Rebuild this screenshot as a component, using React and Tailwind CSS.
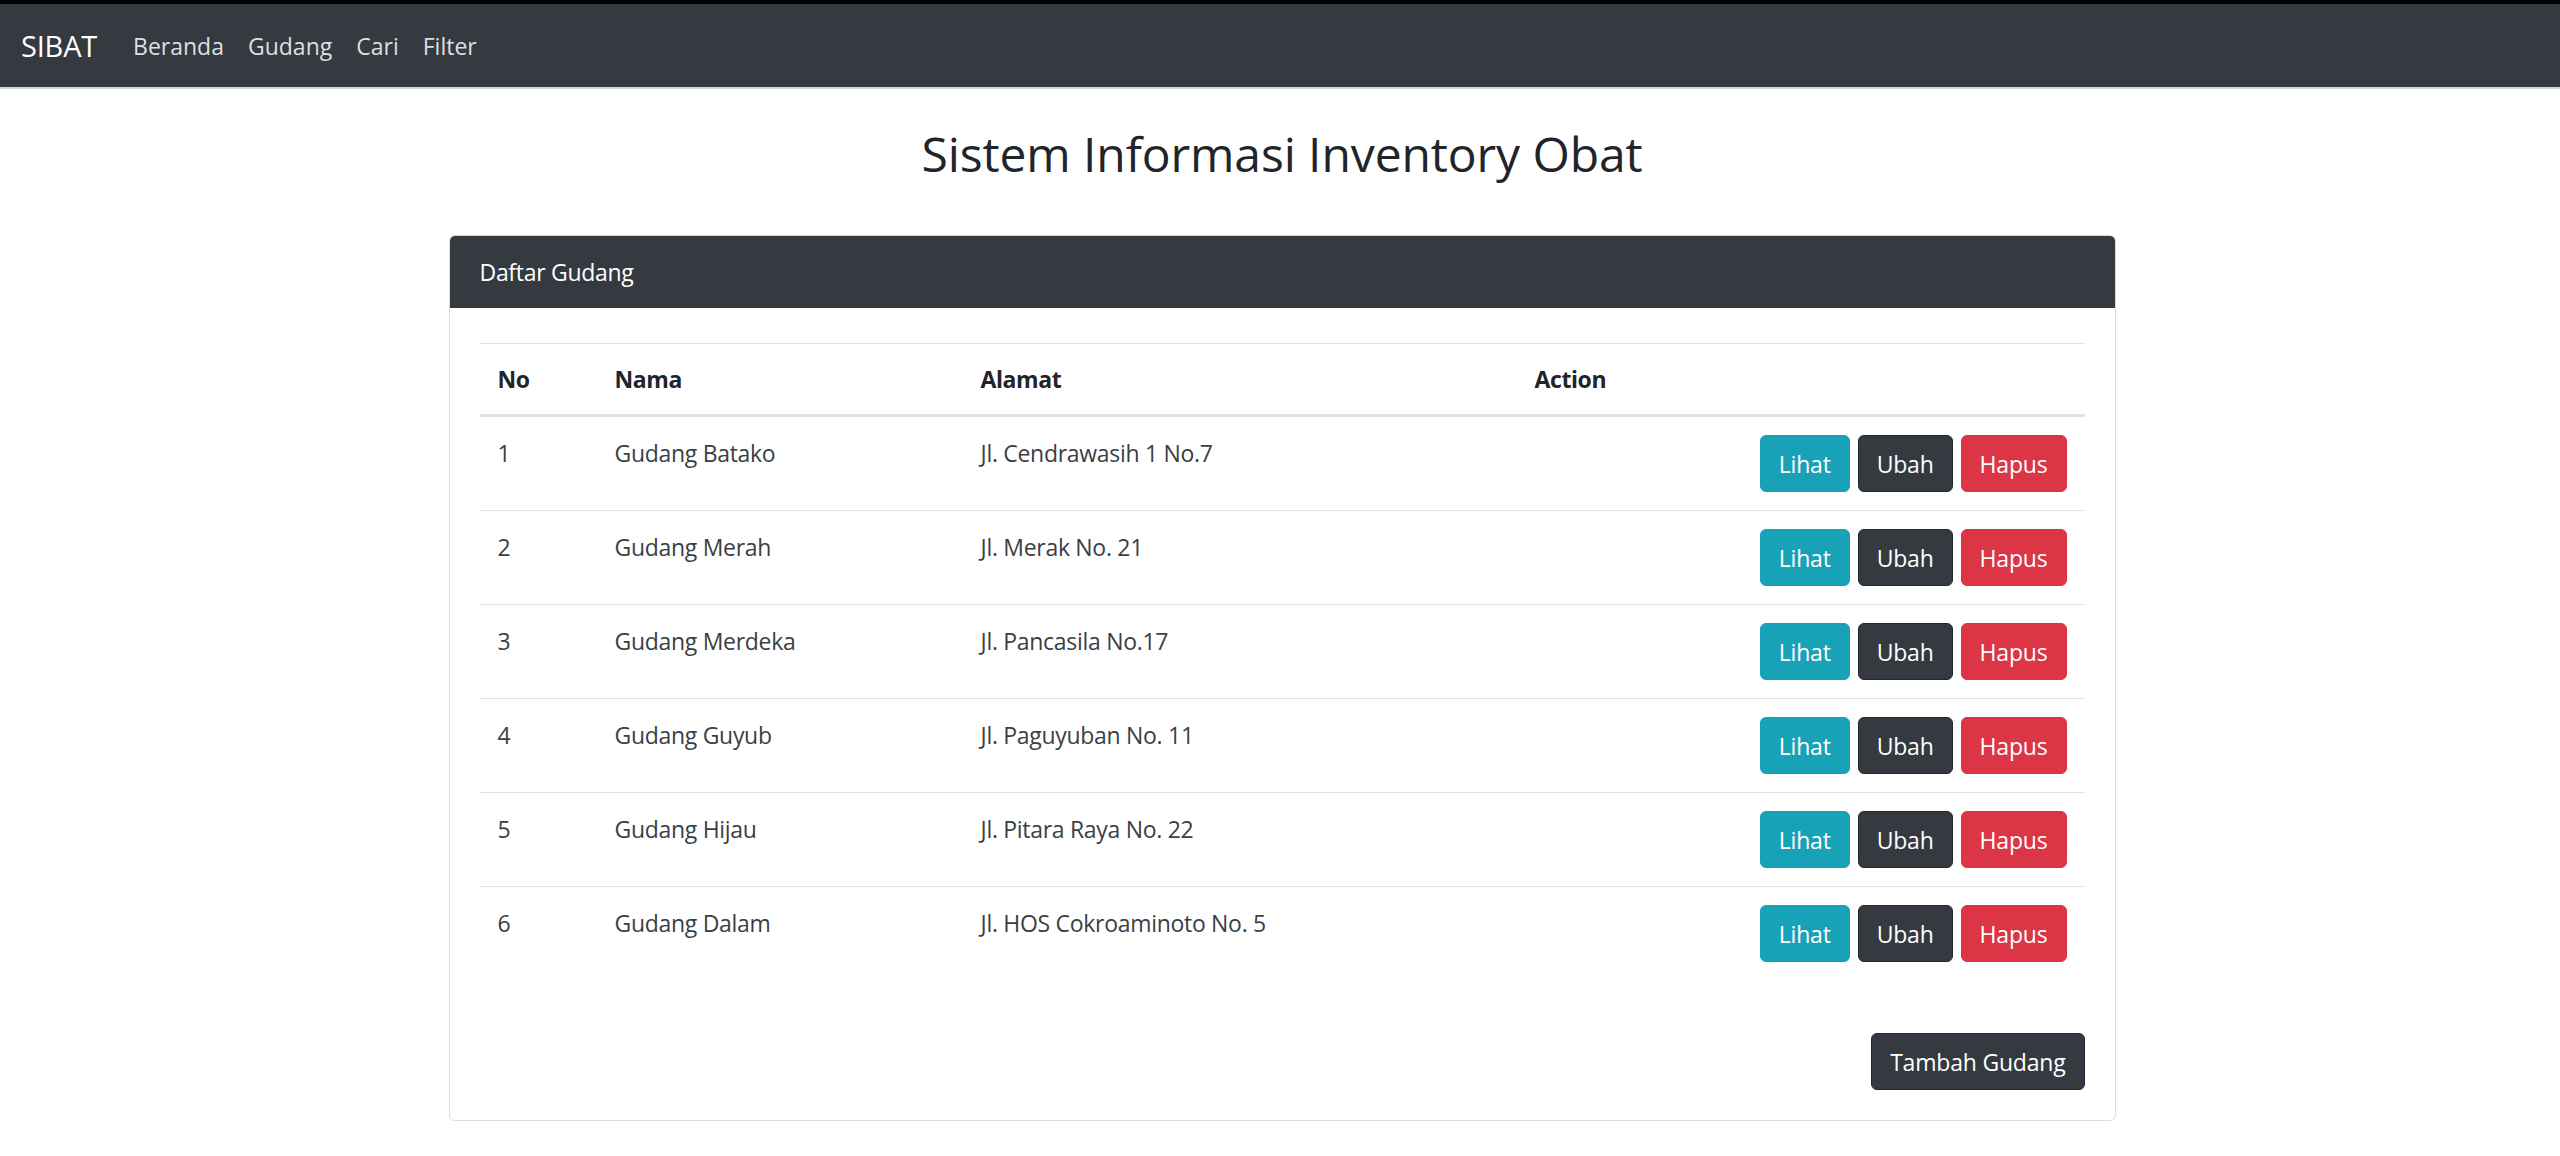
import React from "react";

const rows = [
  ["1", "Gudang Batako", "Jl. Cendrawasih 1 No.7"],
  ["2", "Gudang Merah", "Jl. Merak No. 21"],
  ["3", "Gudang Merdeka", "Jl. Pancasila No.17"],
  ["4", "Gudang Guyub", "Jl. Paguyuban No. 11"],
  ["5", "Gudang Hijau", "Jl. Pitara Raya No. 22"],
  ["6", "Gudang Dalam", "Jl. HOS Cokroaminoto No. 5"],
];

function Btn({ className, children }) {
  return (
    <button
      className={
        "h-[57px] px-[18px] text-[23px] tracking-[-0.2px] leading-[36px] rounded-[6px] border-[1.5px] text-white " +
        className
      }
    >
      {children}
    </button>
  );
}

export default function App() {
  return (
    <div
      className="min-h-screen bg-white text-[#212529]"
      style={{ fontFamily: '"Segoe UI", "Open Sans", "Noto Sans", sans-serif' }}
    >
      <div className="h-[4px] bg-black" />
      <nav className="h-[83px] bg-[#343a40] flex items-center pl-[21px]">
        <span className="text-[29px] tracking-[-0.2px] leading-[45px] text-white mr-[24px]">SIBAT</span>
        <a className="px-[12px] text-[23px] tracking-[0px] leading-[36px] text-[#dedfe1]">Beranda</a>
        <a className="px-[12px] text-[23px] tracking-[0px] leading-[36px] text-[#dedfe1]">Gudang</a>
        <a className="px-[12px] text-[23px] tracking-[0px] leading-[36px] text-[#dedfe1]">Cari</a>
        <a className="px-[12px] text-[23px] tracking-[0px] leading-[36px] text-[#dedfe1]">Filter</a>
      </nav>
      <div className="h-[2px] bg-[#d4d6d8]" />

      <div className="flex justify-center pl-[4px]">
        <div className="w-[1667px]">
          <h2 className="mt-[36px] text-center text-[48px] tracking-[-0.1px] leading-[58px] font-medium text-[#212529]">
            Sistem Informasi Inventory Obat
          </h2>

          <div className="mt-[52px] border border-[#dcdcdc] rounded-[6px] overflow-hidden">
            <div className="h-[72px] bg-[#343a40] flex items-center px-[30px] text-[23px] tracking-[-0.3px] text-white">
              Daftar Gudang
            </div>
            <div className="px-[30px] pt-[35px] pb-[30px]">
              <table className="w-full table-fixed border-collapse text-[23px] tracking-[-0.3px] leading-[36px]">
                <colgroup>
                  <col className="w-[117px]" />
                  <col className="w-[366px]" />
                  <col className="w-[554px]" />
                  <col className="w-[568px]" />
                </colgroup>
                <thead>
                  <tr>
                    <th className="text-left font-bold tracking-[-0.4px] px-[18px] py-[17px] border-t border-t-[#dee2e6] border-b-[3px] border-b-[#dee2e6]">No</th>
                    <th className="text-left font-bold tracking-[-0.4px] px-[18px] py-[17px] border-t border-t-[#dee2e6] border-b-[3px] border-b-[#dee2e6]">Nama</th>
                    <th className="text-left font-bold tracking-[-0.4px] px-[18px] py-[17px] border-t border-t-[#dee2e6] border-b-[3px] border-b-[#dee2e6]">Alamat</th>
                    <th className="text-left font-bold tracking-[-0.4px] px-[18px] py-[17px] border-t border-t-[#dee2e6] border-b-[3px] border-b-[#dee2e6]">Action</th>
                  </tr>
                </thead>
                <tbody>
                  {rows.map((r, i) => (
                    <tr key={r[0]} className={i > 0 ? "border-t border-[#dee2e6]" : ""}>
                      <td className="align-top px-[18px] py-[18px] text-[#3a3f44]">{r[0]}</td>
                      <td className="align-top px-[18px] py-[18px] text-[#3a3f44]">{r[1]}</td>
                      <td className="align-top px-[18px] py-[18px] text-[#3a3f44]">{r[2]}</td>
                      <td className="align-top px-[18px] py-[18px]">
                        <div className="flex justify-end gap-[8px] tracking-[-0.2px]">
                          <Btn className="bg-[#17a2b8] border-[#17a2b8]">Lihat</Btn>
                          <Btn className="bg-[#343a40] border-[#23272b]">Ubah</Btn>
                          <Btn className="bg-[#dc3545] border-[#dc3545]">Hapus</Btn>
                        </div>
                      </td>
                    </tr>
                  ))}
                </tbody>
              </table>
              <div className="mt-[53px] flex justify-end">
                <Btn className="bg-[#343a40] border-[#23272b]">Tambah Gudang</Btn>
              </div>
            </div>
          </div>
        </div>
      </div>
    </div>
  );
}
